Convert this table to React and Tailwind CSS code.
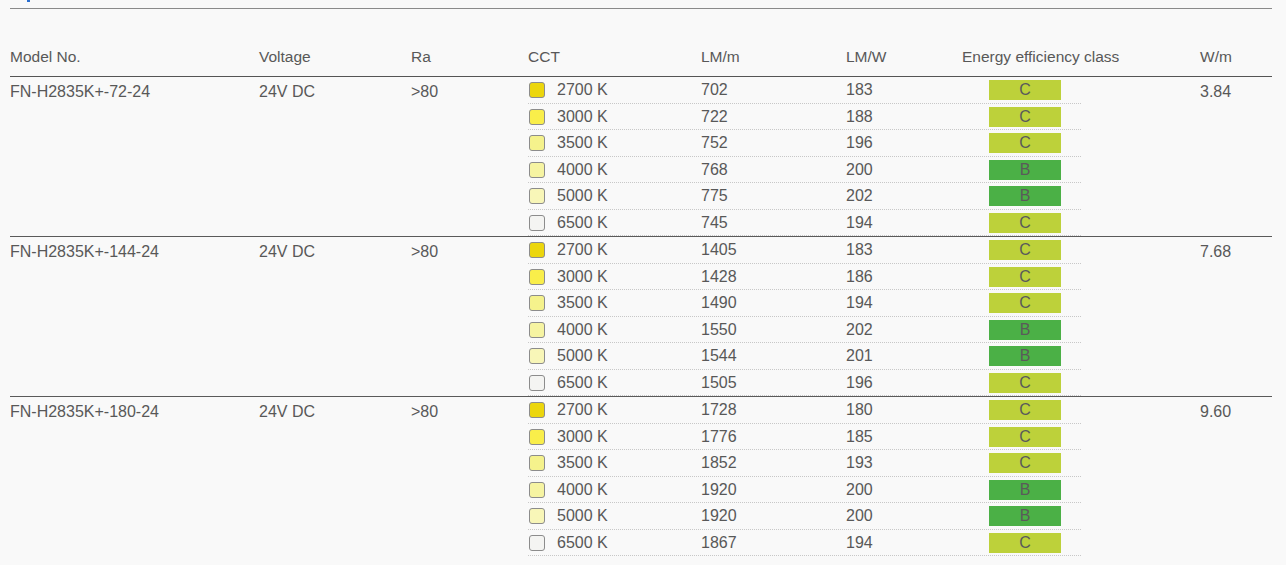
const swatches = {
  "2700 K": "bg-[#ecd60c]",
  "3000 K": "bg-[#f9ee4a]",
  "3500 K": "bg-[#f5f28c]",
  "4000 K": "bg-[#f6f4a2]",
  "5000 K": "bg-[#f8f6b8]",
  "6500 K": "bg-[#f4f4f2]",
};

const groups = [
  {
    model: "FN-H2835K+-72-24",
    wm: "3.84",
    rows: [
      ["2700 K", "702", "183", "C"],
      ["3000 K", "722", "188", "C"],
      ["3500 K", "752", "196", "C"],
      ["4000 K", "768", "200", "B"],
      ["5000 K", "775", "202", "B"],
      ["6500 K", "745", "194", "C"],
    ],
  },
  {
    model: "FN-H2835K+-144-24",
    wm: "7.68",
    rows: [
      ["2700 K", "1405", "183", "C"],
      ["3000 K", "1428", "186", "C"],
      ["3500 K", "1490", "194", "C"],
      ["4000 K", "1550", "202", "B"],
      ["5000 K", "1544", "201", "B"],
      ["6500 K", "1505", "196", "C"],
    ],
  },
  {
    model: "FN-H2835K+-180-24",
    wm: "9.60",
    rows: [
      ["2700 K", "1728", "180", "C"],
      ["3000 K", "1776", "185", "C"],
      ["3500 K", "1852", "193", "C"],
      ["4000 K", "1920", "200", "B"],
      ["5000 K", "1920", "200", "B"],
      ["6500 K", "1867", "194", "C"],
    ],
  },
];

const Row = ({ cct, lm, lmw, cls }) => (
  <div className="flex h-[26.5px] items-center border-b border-dotted border-[#c8c8c8] pt-[1px]">
    <div className="flex w-[173px] items-center">
      <span className={`ml-[1px] h-[16px] w-[16px] rounded-[3px] border border-[#8c8c8c] ${swatches[cct]}`} />
      <span className="ml-[12px]">{cct}</span>
    </div>
    <div className="w-[145px]">{lm}</div>
    <div className="w-[143px]">{lmw}</div>
    <div
      className={`flex h-[20px] w-[72px] items-center justify-center text-[#5a5a5a] ${
        cls === "B" ? "bg-[#4bb046]" : "bg-[#bdd13a]"
      }`}
    >
      {cls}
    </div>
  </div>
);

const Group = ({ model, wm, rows, last }) => (
  <div className={`flex ${last ? "" : "border-b-[1.5px] border-[#5a5a5a]"}`}>
    <div className="w-[249px] pt-[3px]">{model}</div>
    <div className="w-[152px] pt-[3px]">24V DC</div>
    <div className="w-[117px] pt-[3px]">&gt;80</div>
    <div className="flex w-[553px] flex-col">
      {rows.map((r, i) => (
        <Row key={i} cct={r[0]} lm={r[1]} lmw={r[2]} cls={r[3]} />
      ))}
    </div>
    <div className="w-[119px]" />
    <div className="pt-[3px]">{wm}</div>
  </div>
);

export default function App() {
  return (
    <div
      className="h-[565px] w-[1286px] overflow-hidden bg-[#f9f9f9] text-[16px] text-[#585858]"
      style={{ fontFamily: '"Liberation Sans", Arial, sans-serif' }}
    >
      <div className="ml-[27px] h-[2px] w-[3px] bg-[#2a6fd0]" />
      <div className="mx-[10px] mt-[6px] w-[1262px]">
        <div className="border-t-[1.5px] border-[#8a8a8a]" />
        <div className="flex h-[68px] items-end border-b-[1.5px] border-[#555555] pb-[8px] text-[15.5px]">
          <div className="w-[249px]">Model No.</div>
          <div className="w-[152px]">Voltage</div>
          <div className="w-[117px]">Ra</div>
          <div className="w-[173px]">CCT</div>
          <div className="w-[145px]">LM/m</div>
          <div className="w-[116px]">LM/W</div>
          <div className="w-[238px]">Energy efficiency class</div>
          <div>W/m</div>
        </div>
        {groups.map((g, i) => (
          <Group key={i} {...g} last={i === groups.length - 1} />
        ))}
      </div>
    </div>
  );
}
